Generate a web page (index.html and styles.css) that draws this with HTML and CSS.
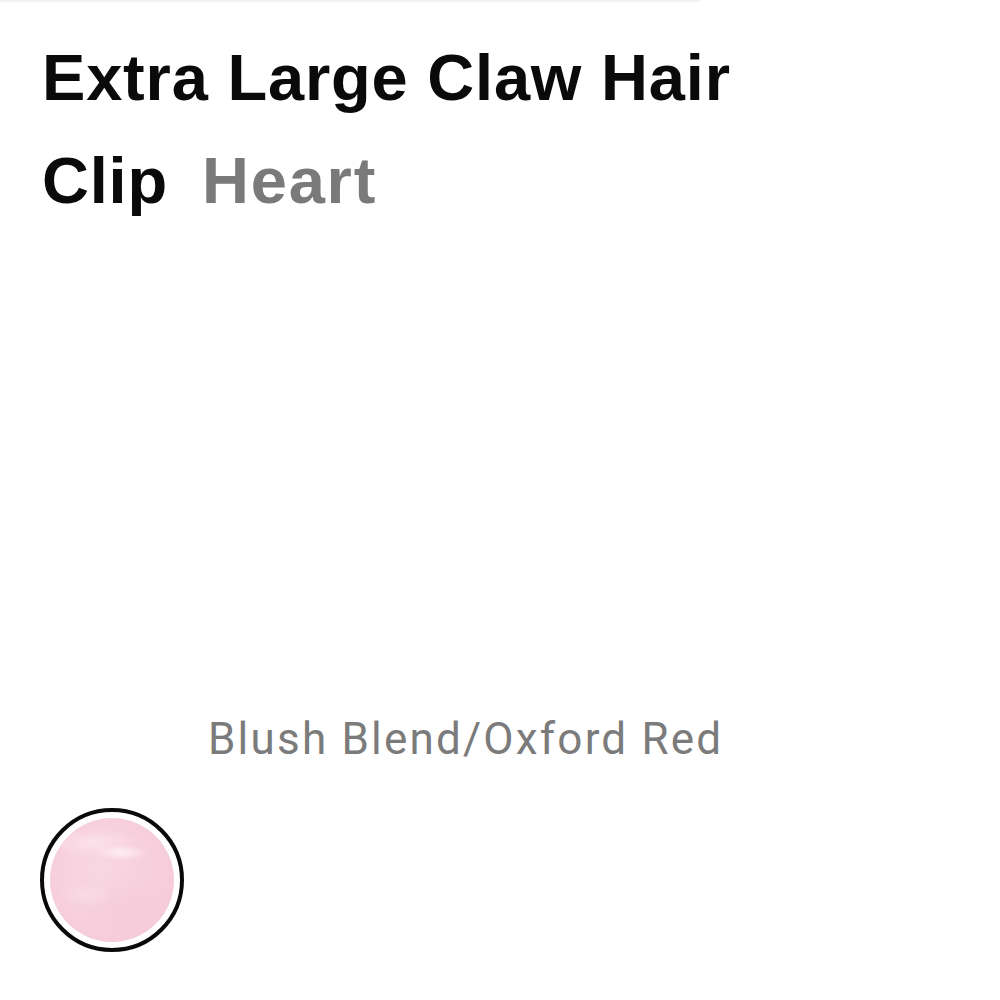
FILE: index.html
```html
<!DOCTYPE html>
<html lang="en">

<head>
	<meta charset="UTF-8">
	<meta name="viewport" content="width=device-width, initial-scale=1.0">
	<title>Extra Large Claw Hair Clip</title>
	<link rel="stylesheet" href="styles.css">
</head>

<body>
	<div class="page">
		<div class="top-rule"></div>

		<h1 class="title">
			<span class="name">Extra Large Claw Hair</span>
			<span class="name">Clip</span>
			<span class="variant">Heart</span>
		</h1>

		<div class="gallery"></div>

		<p class="colour-name">Blush Blend/Oxford Red</p>

		<div class="swatches">
			<button type="button" class="swatch selected" title="Blush Blend/Oxford Red">
				<span class="swatch-fill"></span>
			</button>
		</div>
	</div>
</body>
</html>
```

FILE: styles.css
```css
body {
	margin: 0;
	background-color: #fff;
	font-family: "Liberation Sans", Arial, sans-serif;
}

.page {
	width: 1000px;
	height: 1000px;
	box-sizing: border-box;
	padding: 0 0 0 42px;
	overflow: hidden;
}

.top-rule {
	height: 2px;
	width: 700px;
	margin-left: -42px;
	background-color: hsl(0, 0%, 95%);
}

.title {
	display: flex;
	flex-wrap: wrap;
	align-items: baseline;
	column-gap: 34px;
	margin: 24px 0 0;
	max-width: 740px;
	font-size: 65px;
	font-weight: bold;
	line-height: 103px;
	color: #0a0a0a;
	letter-spacing: 0.8px;
}

.variant {
	color: #7a7a7a;
	letter-spacing: 1.8px;
}

.gallery {
	height: 477px;
}

.colour-name {
	margin: 0 0 0 166px;
	font-family: Roboto, "Liberation Sans", sans-serif;
	font-size: 44px;
	line-height: 60px;
	letter-spacing: 2.2px;
	color: #7b7b7b;
}

.swatches {
	display: flex;
	margin-top: 39px;
	margin-left: -2px;
}

.swatch {
	width: 144px;
	height: 144px;
	padding: 6px;
	border: 4px solid #0a0a0a;
	border-radius: 50%;
	background-color: #fff;
	box-sizing: border-box;
	cursor: pointer;
}

.swatch-fill {
	display: block;
	width: 100%;
	height: 100%;
	border-radius: 50%;
	background:
		radial-gradient(ellipse 26px 8px at 58% 28%, hsla(340, 100%, 98%, 0.8), transparent),
		radial-gradient(ellipse 44px 14px at 35% 20%, hsla(340, 90%, 96%, 0.6), transparent),
		radial-gradient(ellipse 30px 12px at 30% 62%, hsla(340, 80%, 95%, 0.4), transparent),
		radial-gradient(ellipse 50px 30px at 62% 72%, hsla(340, 60%, 86%, 0.4), transparent),
		radial-gradient(circle at 40% 40%, #f9d6e2, #f5c8d7);
}
```
